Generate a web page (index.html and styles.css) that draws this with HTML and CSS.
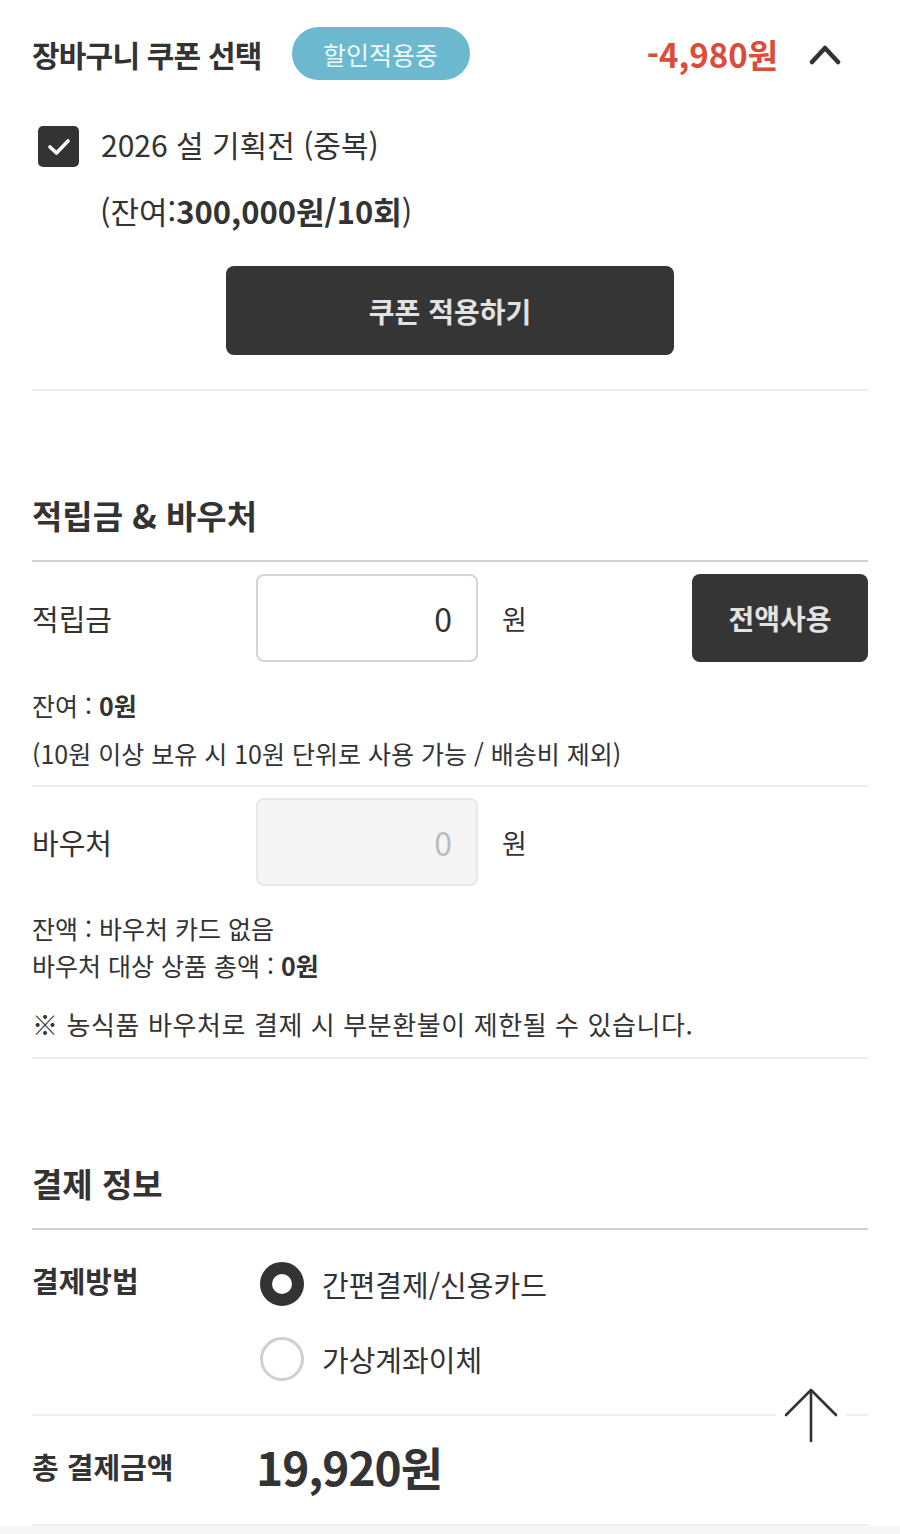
FILE: index.html
```html
<!DOCTYPE html>
<html lang="ko">
<head>
    <meta charset="UTF-8">
    <meta name="viewport" content="width=device-width, initial-scale=1.0">
    <title>주문서 - 결제</title>
    <link rel="stylesheet" href="styles.css">
</head>
<body>
    <div class="order-page">
        <!-- 장바구니 쿠폰 -->
        <section class="coupon-box">
            <div class="coupon-head">
                <h2 class="coupon-title">장바구니 쿠폰 선택</h2>
                <span class="coupon-badge">할인적용중</span>
                <span class="coupon-discount">-4,980원</span>
                <svg class="coupon-toggle" width="34" height="22" viewBox="0 0 34 22">
                    <polyline points="4,19 17,5 30,19" fill="none" stroke="#333" stroke-width="4.5" stroke-linecap="round" stroke-linejoin="round"/>
                </svg>
            </div>
            <label class="coupon-item">
                <span class="check-box">
                    <svg width="24" height="20" viewBox="0 0 24 20">
                        <polyline points="3,10 9.5,16 21,4" fill="none" stroke="#fff" stroke-width="3.6" stroke-linecap="round" stroke-linejoin="round"/>
                    </svg>
                </span>
                <span class="coupon-name">2026 설 기획전 (중복)</span>
            </label>
            <div class="coupon-remain">(잔여:<b>300,000원/10회</b>)</div>
            <button class="btn-apply">쿠폰 적용하기</button>
        </section>

        <!-- 적립금 & 바우처 -->
        <section class="block">
            <h3 class="block-title">적립금 &amp; 바우처</h3>
            <div class="field-row">
                <span class="field-label">적립금</span>
                <input class="field-input" type="text" value="0" readonly>
                <span class="field-unit">원</span>
                <button class="btn-all">전액사용</button>
            </div>
            <div class="point-info">
                <p>잔여 : <b>0원</b></p>
                <p>(10원 이상 보유 시 10원 단위로 사용 가능 / 배송비 제외)</p>
            </div>
            <div class="field-row voucher-row">
                <span class="field-label">바우처</span>
                <input class="field-input is-disabled" type="text" value="0" disabled>
                <span class="field-unit">원</span>
            </div>
            <div class="voucher-info">
                <p>잔액 : 바우처 카드 없음</p>
                <p>바우처 대상 상품 총액 : <b>0원</b></p>
            </div>
            <p class="voucher-note">※ 농식품 바우처로 결제 시 부분환불이 제한될 수 있습니다.</p>
        </section>

        <!-- 결제 정보 -->
        <section class="block pay-block">
            <h3 class="block-title">결제 정보</h3>
            <div class="pay-method">
                <span class="pay-label">결제방법</span>
                <div class="pay-options">
                    <label class="radio-row">
                        <span class="radio is-checked"></span>
                        <span>간편결제/신용카드</span>
                    </label>
                    <label class="radio-row">
                        <span class="radio"></span>
                        <span>가상계좌이체</span>
                    </label>
                </div>
            </div>
            <div class="pay-total">
                <span class="pay-label">총 결제금액</span>
                <span class="total-price">19,920원</span>
            </div>
        </section>
    </div>

    <a class="go-top" href="#">
        <svg width="56" height="58" viewBox="0 0 56 58">
            <line x1="28" y1="6" x2="28" y2="56" stroke="#333" stroke-width="2.6" stroke-linecap="round"/>
            <polyline points="3,30 28,5 53,30" fill="none" stroke="#333" stroke-width="2.6" stroke-linecap="round" stroke-linejoin="round"/>
        </svg>
    </a>
</body>
</html>
```

FILE: styles.css
```css
body {
    margin: 0;
    padding: 0;
    font-family: "Noto Sans CJK KR", "Noto Sans", sans-serif;
    background-color: #f7f7f7;
    color: #333;
}
p {
    margin: 0;
}
.order-page {
    background: #fff;
    padding: 0 32px;
}

/* 쿠폰 */
.coupon-box {
    padding-top: 27px;
    padding-bottom: 34px;
    border-bottom: 2px solid #eee;
}
.coupon-head {
    display: flex;
    align-items: center;
    height: 53px;
}
.coupon-title {
    margin: 0;
    font-size: 30px;
    font-weight: 700;
    letter-spacing: -0.8px;
}
.coupon-badge {
    margin-left: 30px;
    width: 178px;
    height: 53px;
    border-radius: 27px;
    background: #6cb9cf;
    color: #eef8fb;
    font-size: 25px;
    display: flex;
    align-items: center;
    justify-content: center;
}
.coupon-discount {
    margin-left: auto;
    color: #d94d3a;
    font-size: 33px;
    font-weight: 700;
}
.coupon-toggle {
    margin-left: 30px;
    margin-right: 26px;
}
.coupon-item {
    display: flex;
    align-items: center;
    margin-top: 46px;
    padding-left: 6px;
    height: 41px;
}
.check-box {
    width: 41px;
    height: 41px;
    border-radius: 5px;
    background: #333;
    display: flex;
    align-items: center;
    justify-content: center;
}
.coupon-name {
    margin-left: 22px;
    font-size: 30px;
    line-height: 36px;
    margin-top: -6px;
}
.coupon-remain {
    margin-top: 24px;
    padding-left: 68px;
    font-size: 31px;
    line-height: 40px;
}
.btn-apply {
    display: block;
    margin: 35px auto 0;
    width: 448px;
    height: 89px;
    border: none;
    border-radius: 8px;
    background: #353535;
    color: #e2e2e2;
    font-family: inherit;
    font-size: 28px;
    font-weight: 700;
}

/* 공통 블록 */
.block {
    padding-top: 102px;
    padding-bottom: 13px;
    border-bottom: 2px solid #eee;
}
.block-title {
    margin: 0;
    font-size: 33px;
    font-weight: 700;
    line-height: 44px;
    padding-bottom: 23px;
    border-bottom: 2px solid #d0d0d0;
}

.field-row {
    display: flex;
    align-items: center;
    margin-top: 12px;
    height: 88px;
}
.field-label {
    width: 224px;
    font-size: 29px;
}
.field-input {
    box-sizing: border-box;
    width: 222px;
    height: 88px;
    border: 2px solid #d4d4d4;
    border-radius: 8px;
    background: #fff;
    padding: 0 24px;
    text-align: right;
    font-family: inherit;
    font-size: 32px;
    color: #333;
    outline: none;
}
.field-input.is-disabled {
    background: #f5f5f5;
    border-color: #e8e8e8;
    color: #bbb;
}
.field-unit {
    margin-left: 24px;
    font-size: 27px;
}
.btn-all {
    margin-left: auto;
    width: 176px;
    height: 88px;
    border: none;
    border-radius: 8px;
    background: #353535;
    color: #e2e2e2;
    font-family: inherit;
    font-size: 28px;
    font-weight: 700;
}
.point-info {
    margin-top: 19px;
    padding-bottom: 8px;
    border-bottom: 2px solid #eee;
    font-size: 25px;
    line-height: 48px;
}
.voucher-row {
    margin-top: 11px;
}
.voucher-info {
    margin-top: 24px;
    font-size: 25px;
    line-height: 37px;
}
.voucher-note {
    margin-top: 20px;
    font-size: 26px;
    line-height: 40px;
    letter-spacing: 0.6px;
}

/* 결제 정보 */
.pay-block {
    padding-bottom: 0;
}
.pay-method {
    display: flex;
    align-items: flex-start;
    margin-top: 32px;
    padding-bottom: 33px;
    border-bottom: 2px solid #eee;
}
.pay-label {
    width: 224px;
    font-size: 29px;
    font-weight: 700;
    line-height: 36px;
}
.pay-options {
    display: flex;
    flex-direction: column;
    gap: 31px;
    padding-left: 4px;
}
.radio-row {
    display: flex;
    align-items: center;
    gap: 18px;
    height: 44px;
    font-size: 29px;
}
.radio {
    box-sizing: border-box;
    width: 44px;
    height: 44px;
    border-radius: 50%;
    border: 3px solid #cfcfcf;
    background: #fff;
}
.radio.is-checked {
    border: 12px solid #333;
}
.pay-total {
    display: flex;
    align-items: center;
    height: 60px;
    padding: 20px 0 28px;
}
.total-price {
    font-size: 46px;
    font-weight: 700;
    letter-spacing: -1px;
}

/* 맨 위로 */
.go-top {
    position: fixed;
    right: 54px;
    bottom: 84px;
    width: 70px;
    height: 72px;
    background: #fff;
    display: flex;
    align-items: center;
    justify-content: center;
}
```
